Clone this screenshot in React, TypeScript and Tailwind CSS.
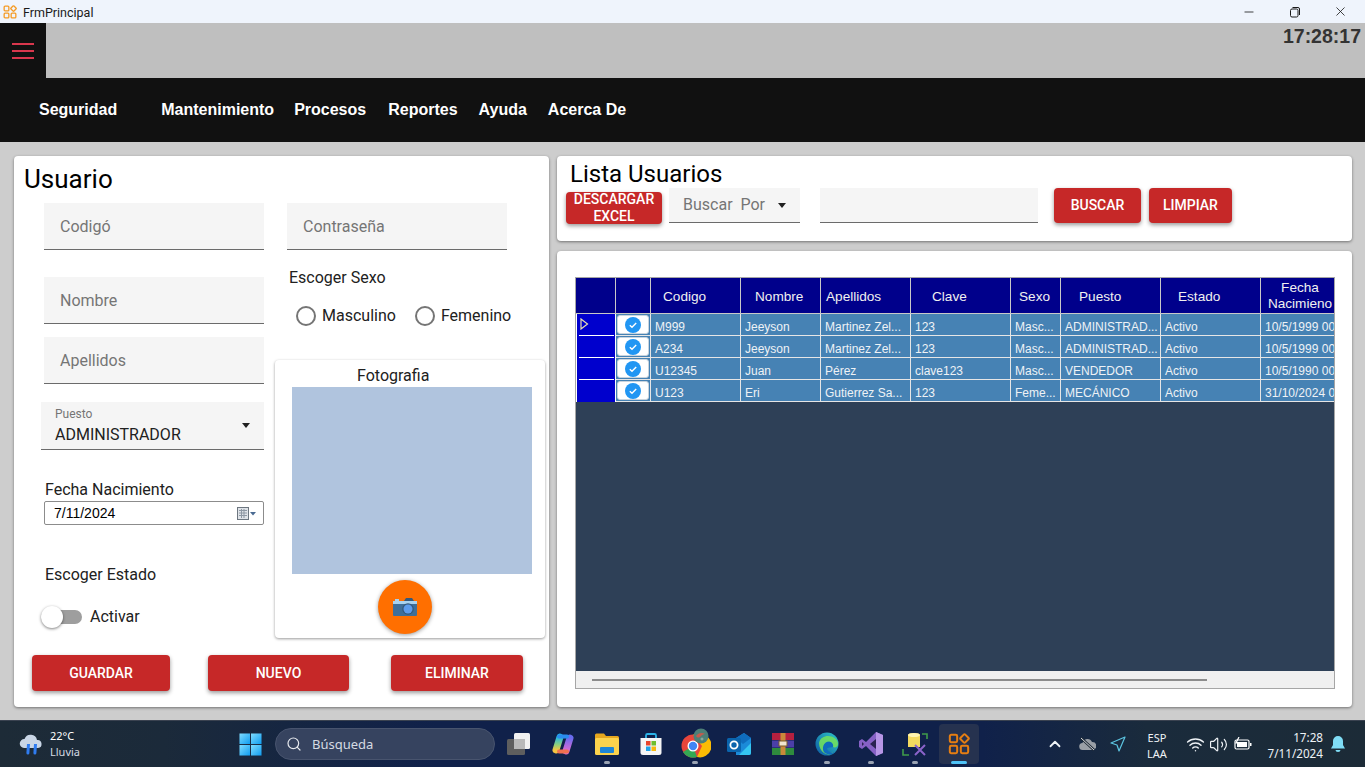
import { ReactNode } from 'react';
import { Search, ChevronUp, Wifi, Volume2, Minus, X } from 'lucide-react';

const columns = [
  { label: 'Codigo', w: 'w-[90px]', indent: 'pl-[12px]' },
  { label: 'Nombre', w: 'w-[80px]', indent: 'pl-[14px]' },
  { label: 'Apellidos', w: 'w-[90px]', indent: 'pl-[5px]' },
  { label: 'Clave', w: 'w-[100px]', indent: 'pl-[21px]' },
  { label: 'Sexo', w: 'w-[50px]', indent: 'pl-[8px]' },
  { label: 'Puesto', w: 'w-[100px]', indent: 'pl-[18px]' },
  { label: 'Estado', w: 'w-[100px]', indent: 'pl-[17px]' },
];

const rows = [
  ['M999', 'Jeeyson', 'Martinez Zel...', '123', 'Masc...', 'ADMINISTRAD...', 'Activo', '10/5/1999 00:00'],
  ['A234', 'Jeeyson', 'Martinez Zel...', '123', 'Masc...', 'ADMINISTRAD...', 'Activo', '10/5/1999 00:00'],
  ['U12345', 'Juan', 'Pérez', 'clave123', 'Masc...', 'VENDEDOR', 'Activo', '10/5/1990 00:00'],
  ['U123', 'Eri', 'Gutierrez Sa...', '123', 'Feme...', 'MECÁNICO', 'Activo', '31/10/2024 00:00'],
];

function AppLogo({ size, color }: { size: number; color: string }) {
  return (
    <svg width={size} height={size} viewBox="0 0 24 24" fill="none" stroke={color} strokeWidth="2.2">
      <rect x="2" y="2" width="8" height="8" rx="1.5" />
      <rect x="14.4" y="2.4" width="7.2" height="7.2" rx="1.2" transform="rotate(45 18 6)" />
      <rect x="2" y="14" width="8" height="8" rx="1.5" />
      <rect x="14" y="14" width="8" height="8" rx="1.5" />
    </svg>
  );
}

function TextField({ label, className }: { label: string; className: string }) {
  return (
    <div className={`h-[47px] w-[220px] border-b border-[#6b6b6b] bg-[#f5f5f5] flex items-center pl-[16px] pt-[2px] text-[16px] text-[#757575] ${className}`}>
      {label}
    </div>
  );
}

function RedButton({ children, className }: { children: ReactNode; className: string }) {
  return (
    <button className={`rounded-[4px] bg-[#c62828] text-white text-[14px] font-medium shadow-[0_2px_4px_rgba(0,0,0,0.4)] flex items-center justify-center ${className}`}>
      {children}
    </button>
  );
}

function Radio({ label }: { label: string }) {
  return (
    <div className="flex items-center gap-[6px] text-[16px] text-[#212121]">
      <span className="w-[20px] h-[20px] rounded-full border-2 border-[#757575] bg-white" />
      {label}
    </div>
  );
}

function RowCheck() {
  return (
    <div className="w-[35px] h-[22px] shrink-0 flex items-center justify-center border-r border-b border-[#e6e6e6] bg-[#4682b4]">
      <div className="w-[32px] h-[19px] rounded-[3px] bg-white border border-[#c9d4de] flex items-center justify-center">
        <svg width="16" height="16" viewBox="0 0 16 16">
          <circle cx="8" cy="8" r="8" fill="#2196f3" />
          <path d="M4.8 8.2 7 10.3 11.2 6" fill="none" stroke="white" strokeWidth="1.4" />
        </svg>
      </div>
    </div>
  );
}

function UserGrid() {
  return (
    <div className="h-[412px] w-[760px] border border-[#a6a6a6] bg-[#2e4057] flex flex-col overflow-hidden font-['Liberation_Sans',sans-serif]">
      <div className="flex h-[36px] shrink-0 bg-[#00008b] text-[13.6px] text-[#f0f0f0] border-b border-[#c8c8c8]">
        <div className="w-[40px] shrink-0 border-r border-[#c8c8c8]" />
        <div className="w-[35px] shrink-0 border-r border-[#c8c8c8]" />
        {columns.map((c) => (
          <div key={c.label} className={`${c.w} ${c.indent} shrink-0 border-r border-[#c8c8c8] flex items-center pt-[3px]`}>
            {c.label}
          </div>
        ))}
        <div className="w-[74px] shrink-0 text-center leading-[16px] pt-[2px] pl-[4px] whitespace-nowrap">
          Fecha
          <br />
          Nacimieno
        </div>
      </div>

      {rows.map((r, i) => (
        <div key={r[0] + i} className="flex h-[22px] shrink-0 text-[12px] text-[#eef2f6]">
          <div className="w-[40px] shrink-0 bg-[#0000cd] border-l border-white border-r relative">
            {i === 0 && (
              <svg className="absolute left-[3px] top-[4px]" width="9" height="12" viewBox="0 0 9 12">
                <path d="M1 1 L7.5 6 L1 11 Z" fill="#0000cd" stroke="#e8e0b0" strokeWidth="1.2" />
              </svg>
            )}
            {i < 3 && <div className="absolute left-[2px] right-[1px] bottom-0 h-[1px] bg-white" />}
          </div>
          <RowCheck />
          {r.slice(0, 7).map((v, j) => (
            <div
              key={j}
              className={`${columns[j].w} shrink-0 bg-[#4682b4] border-r border-b border-[#e6e6e6] pl-[4px] pt-[4px] whitespace-nowrap overflow-hidden`}
            >
              {v}
            </div>
          ))}
          <div className="w-[74px] shrink-0 bg-[#4682b4] border-b border-[#e6e6e6] pl-[4px] pt-[4px] whitespace-nowrap overflow-hidden">
            {r[7]}
          </div>
        </div>
      ))}
      <div className="flex-1" />
      <div className="h-[17px] shrink-0 bg-[#f0f0f0] flex items-center pl-[16px]">
        <div className="h-[2px] w-[615px] bg-[#8c8c8c]" />
      </div>
    </div>
  );
}

function WeatherIcon() {
  return (
    <svg width="26" height="24" viewBox="0 0 26 24">
      <path d="M6 16a4.5 4.5 0 0 1 .5-9 6.5 6.5 0 0 1 12.5 1 4 4 0 0 1 1 8Z" fill="#c9d6e6" />
      <path d="M9 12h3l-.6 9a1.5 1.5 0 0 1-3 0Z" fill="#2f7cf0" />
      <path d="M16 12h3l-.6 9a1.5 1.5 0 0 1-3 0Z" fill="#2f7cf0" />
    </svg>
  );
}

function WindowsLogo() {
  return (
    <svg width="23" height="23" viewBox="0 0 24 24">
      <defs>
        <linearGradient id="win" x1="0" y1="0" x2="1" y2="1">
          <stop offset="0" stopColor="#7fdcff" />
          <stop offset="1" stopColor="#0f9cf0" />
        </linearGradient>
      </defs>
      <rect x="0.5" y="0.5" width="11" height="11" fill="url(#win)" />
      <rect x="12.5" y="0.5" width="11" height="11" fill="url(#win)" />
      <rect x="0.5" y="12.5" width="11" height="11" fill="url(#win)" />
      <rect x="12.5" y="12.5" width="11" height="11" fill="url(#win)" />
    </svg>
  );
}

function TaskIcon({ children, dot, active }: { children: ReactNode; dot?: boolean; active?: boolean }) {
  return (
    <div className={`relative w-[40px] h-[40px] mx-[2px] flex items-center justify-center rounded-[4px] ${active ? 'bg-[#26324f]' : ''}`}>
      {children}
      {dot && <span className="absolute bottom-[0px] left-[17px] w-[6px] h-[3px] rounded-full bg-[#9aa3b2]" />}
      {active && <span className="absolute bottom-[0px] left-[12px] w-[16px] h-[3px] rounded-full bg-[#4fc3f7]" />}
    </div>
  );
}

function TaskbarApps() {
  return (
    <div className="flex items-center">
      <TaskIcon>
        <svg width="26" height="24" viewBox="0 0 26 24">
          <rect x="8" y="1" width="16" height="16" rx="1.5" fill="#f1f1f1" />
          <rect x="1" y="7" width="18" height="16" rx="1.5" fill="#5e5e5e" />
          <rect x="8" y="7" width="11" height="10" fill="#b9b9b9" />
        </svg>
      </TaskIcon>
      <TaskIcon>
        <svg width="24" height="22" viewBox="0 0 24 22" fill="none" strokeLinecap="round">
          <defs>
            <linearGradient id="copL" x1="0" y1="0" x2="0" y2="1">
              <stop offset="0" stopColor="#1fb6e8" />
              <stop offset="0.6" stopColor="#8fd07a" />
              <stop offset="1" stopColor="#f5c542" />
            </linearGradient>
            <linearGradient id="copR" x1="0" y1="0" x2="0" y2="1">
              <stop offset="0" stopColor="#6a6cf0" />
              <stop offset="1" stopColor="#e06ad0" />
            </linearGradient>
          </defs>
          <path d="M9 4 5 17" stroke="url(#copL)" strokeWidth="7" />
          <path d="M19 5 15 18" stroke="url(#copR)" strokeWidth="7" />
          <path d="M8 3.500h8" stroke="#2a8cf0" strokeWidth="4" />
          <path d="M8 18.500h8" stroke="#f0704f" strokeWidth="4" />
        </svg>
      </TaskIcon>
      <TaskIcon dot>
        <svg width="24" height="22" viewBox="0 0 24 22">
          <path d="M0 2a1.5 1.5 0 0 1 1.5-1.5H9L11 3h11.5A1.5 1.5 0 0 1 24 4.500V8H0Z" fill="#e6a71f" />
          <rect x="0" y="5" width="24" height="17" rx="1.5" fill="#fcd34d" />
          <rect x="5" y="14" width="14" height="6" rx="1" fill="#1f86d6" />
        </svg>
      </TaskIcon>
      <TaskIcon>
        <svg width="24" height="24" viewBox="0 0 24 24">
          <path d="M7 7V3.500A1.500 1.500 0 0 1 8.500 2h7A1.500 1.500 0 0 1 17 3.500V7" fill="none" stroke="#2db4e8" strokeWidth="1.8" />
          <path d="M1.500 6h21v14.500a2.500 2.500 0 0 1-2.500 2.500H4a2.500 2.500 0 0 1-2.500-2.500Z" fill="#f5f5f5" />
          <rect x="7" y="9" width="4.500" height="4.500" fill="#e8452c" />
          <rect x="12.500" y="9" width="4.500" height="4.500" fill="#6fbe2e" />
          <rect x="7" y="14.500" width="4.500" height="4.500" fill="#1fa2e8" />
          <rect x="12.500" y="14.500" width="4.500" height="4.500" fill="#f7b90f" />
        </svg>
      </TaskIcon>
      <TaskIcon dot>
        <svg width="32" height="32" viewBox="0 0 32 32">
          <circle cx="14" cy="18" r="11.500" fill="#e8453c" />
          <path d="M14 18 4 24a11.500 11.500 0 0 0 14 5Z" fill="#34a853" />
          <path d="M14 6.500h10A11.500 11.500 0 0 1 18 29l5-11Z" fill="#fbbc04" />
          <circle cx="14" cy="18" r="5.500" fill="white" />
          <circle cx="14" cy="18" r="4.200" fill="#4285f4" />
          <circle cx="22" cy="8" r="7.500" fill="#4d7f77" />
          <path d="M17 8c2-3 6-4 9-2-2 0-3 1-4 2s-3 3-5 0Z" fill="#c25b4e" />
          <circle cx="23" cy="11" r="1.500" fill="#88a89a" />
        </svg>
      </TaskIcon>
      <TaskIcon>
        <svg width="26" height="24" viewBox="0 0 26 24">
          <path d="M10 6 18 1l7 5v15a2 2 0 0 1-2 2H10Z" fill="#1b8ad8" />
          <path d="M13 23 25 11v10a2 2 0 0 1-2 2Z" fill="#35c5f0" />
          <path d="M10 6 18 1l7 5-8 6Z" fill="#0f6cbd" />
          <rect x="1" y="6" width="14" height="14" rx="1.500" fill="#0a64ad" />
          <circle cx="8" cy="13" r="3.600" fill="none" stroke="white" strokeWidth="1.800" />
        </svg>
      </TaskIcon>
      <TaskIcon>
        <svg width="24" height="24" viewBox="0 0 24 24">
          <rect x="1" y="1" width="22" height="7" fill="#b5203f" />
          <rect x="1" y="8.500" width="22" height="7" fill="#4b3fa8" />
          <rect x="1" y="16" width="22" height="7" fill="#2e8b3d" />
          <rect x="9.500" y="1" width="5" height="22" fill="#c98a3a" />
          <rect x="8" y="9" width="8" height="5" fill="#f0e6d0" stroke="#7a5a2a" />
        </svg>
      </TaskIcon>
      <TaskIcon dot>
        <svg width="24" height="24" viewBox="0 0 24 24">
          <defs>
            <linearGradient id="edge" x1="0" y1="1" x2="1" y2="0">
              <stop offset="0" stopColor="#0c59a4" />
              <stop offset="1" stopColor="#2fc6c6" />
            </linearGradient>
          </defs>
          <circle cx="12" cy="12" r="11.500" fill="url(#edge)" />
          <path d="M4 11c1-5 5-7 9-7 5 0 10 3 10 8 0 3-3 4-5 3 1-4-3-6-6-5-3 1-4 5-1 8 2 2 5 3 8 2-3 3-7 3-10 1-3-2-5-6-5-10Z" fill="#74e35a" opacity="0.85" />
          <path d="M12 10c3-1 7 1 6 5-3 1-6 0-6 2 1 3 5 4 8 3-3 3-7 3-10 1-3-2-3-9 2-11Z" fill="#0f6cbd" />
        </svg>
      </TaskIcon>
      <TaskIcon dot>
        <svg width="24" height="26" viewBox="0 0 24 26">
          <path d="M17 1 24 4v18l-7 3L7 15l-4 3-3-2V10l3-2 4 3Z" fill="#8661c5" />
          <path d="M17 1v24l7-3V4Z" fill="#b796e6" />
          <path d="M17 8v10l-6-5Z" fill="#2a2350" />
          <path d="M3 11v4l2-2Z" fill="#2a2350" />
        </svg>
      </TaskIcon>
      <TaskIcon dot>
        <svg width="26" height="26" viewBox="0 0 26 26" fill="none">
          <path d="M6 4a6 2 0 0 1 12 0v12H6Z" fill="#f4d95f" />
          <ellipse cx="12" cy="4" rx="6" ry="2" fill="#fff3b0" />
          <path d="M20 3h5v5M1 18v6h6" stroke="#3f9b4a" strokeWidth="1.600" />
          <path d="M13 14l10 10M23 14 13 24" stroke="#8a63c9" strokeWidth="2" />
        </svg>
      </TaskIcon>
      <TaskIcon active>
        <AppLogo size={22} color="#e67e12" />
      </TaskIcon>
    </div>
  );
}

function TrayIcons() {
  return (
    <div className="flex items-center text-[#eef2f6]">
      <ChevronUp size={18} strokeWidth={2.4} />
      <svg className="ml-[15px]" width="17" height="14" viewBox="0 0 17 14">
        <path d="M4 13a3.500 3.500 0 0 1-.5-7A5 5 0 0 1 13 5a3.200 3.200 0 0 1 .5 8Z" fill="#9a9fa6" />
        <path d="M2 1l13 12" stroke="#1f2a36" strokeWidth="2.500" />
        <path d="M2 1l13 12" stroke="#d5d8dc" strokeWidth="1" />
      </svg>
      <svg className="ml-[14px]" width="16" height="16" viewBox="0 0 16 16" fill="none">
        <path d="M15 1 1 7l6 2 2 6Z" stroke="#5cc4e0" strokeWidth="1.200" strokeLinejoin="round" />
      </svg>
      <div className="ml-[7px] w-[48px] pt-[3px] text-center text-[11px] leading-[16px] font-['Noto_Sans',sans-serif]">
        ESP
        <br />
        LAA
      </div>
      <Wifi size={19} strokeWidth={1.800} className="ml-[5px]" />
      <Volume2 size={19} strokeWidth={1.500} className="ml-[4px]" />
      <svg className="ml-[6px]" width="18" height="14" viewBox="0 0 18 14" fill="none">
        <rect x="1" y="3" width="14" height="9" rx="1.500" stroke="white" strokeWidth="1.200" />
        <rect x="3" y="5" width="10" height="5" fill="white" />
        <rect x="16" y="6" width="1.500" height="3" fill="white" />
        <path d="M5 0 2 6h3l-1 4" stroke="white" strokeWidth="1.200" />
      </svg>
      <div className="w-[71px] pt-[1px] text-right text-[11.7px] leading-[16px] font-['Noto_Sans',sans-serif]">
        17:28
        <br />
        7/11/2024
      </div>
      <svg className="ml-[7px]" width="16" height="18" viewBox="0 0 16 18">
        <path d="M8 1a5 5 0 0 0-5 5v4l-2 3.500h14L13 10V6a5 5 0 0 0-5-5Z" fill="#7fdcf5" />
        <path d="M5.500 15h5a2.500 2 0 0 1-5 0Z" fill="#7fdcf5" />
      </svg>
    </div>
  );
}

export default function App() {
  return (
    <div className="w-[1365px] h-[767px] overflow-hidden flex flex-col bg-[#cdcdcd] font-['Roboto',sans-serif]">
      {/* title bar */}
      <div className="h-[23px] shrink-0 bg-[#eff4fc] flex items-center text-[#1a1a1a]">
        <div className="ml-[3px]">
          <AppLogo size={14} color="#f59a23" />
        </div>
        <span className="ml-[6px] pt-[3px] text-[12.5px] font-['Roboto',sans-serif]">FrmPrincipal</span>
        <div className="ml-auto flex items-center mr-[17px]">
          <Minus size={14} strokeWidth={1.400} />
          <svg className="ml-[33px]" width="12" height="12" viewBox="0 0 12 12" fill="none" stroke="#1a1a1a">
            <rect x="1.500" y="3" width="7.500" height="8" rx="1.500" />
            <path d="M3.500 1.500H9a1.500 1.500 0 0 1 1.500 1.500v6" />
          </svg>
          <X size={15} strokeWidth={1.300} className="ml-[32px]" />
        </div>
      </div>

      {/* clock strip */}
      <div className="h-[55px] shrink-0 bg-[#bfbfbf] flex justify-between">
        <div className="w-[46px] bg-[#111111] flex items-center justify-center">
          <div className="flex flex-col gap-[5px]">
            <span className="block w-[22px] h-[2px] bg-[#d9374d]" />
            <span className="block w-[22px] h-[2px] bg-[#d9374d]" />
            <span className="block w-[22px] h-[2px] bg-[#d9374d]" />
          </div>
        </div>
        <div className="mr-[4px] mt-[2px] text-[19.5px] leading-[22px] font-bold text-[#333333] font-['Liberation_Sans',sans-serif]">
          17:28:17
        </div>
      </div>

      {/* menu */}
      <div className="h-[64px] shrink-0 bg-[#111111] flex items-center text-white text-[16px] font-bold font-['Liberation_Sans',sans-serif] pb-[1px]">
        <span className="ml-[39px]">Seguridad</span>
        <span className="ml-[44px]">Mantenimiento</span>
        <span className="ml-[20px]">Procesos</span>
        <span className="ml-[22px]">Reportes</span>
        <span className="ml-[21px]">Ayuda</span>
        <span className="ml-[21px]">Acerca De</span>
      </div>

      {/* body */}
      <div className="flex-1 min-h-0 flex gap-[8px] pt-[14px] pb-[13px] pl-[14px] pr-[13px]">
        {/* form card */}
        <div className="w-[535px] rounded-[4px] bg-white shadow-[0_1px_3px_rgba(0,0,0,0.45)]">
          <div className="h-[47px] pl-[10px] pt-[6px] text-[26px] leading-[34px] text-black">Usuario</div>
          <div className="flex h-[435px] pl-[27px]">
            <div className="w-[223px] flex flex-col text-[#212121]">
              <TextField label="Codigó" className="ml-[3px]" />
              <TextField label="Nombre" className="ml-[3px] mt-[27px]" />
              <TextField label="Apellidos" className="ml-[3px] mt-[13px]" />
              <div className="mt-[18px] h-[48px] bg-[#f5f5f5] border-b border-[#6b6b6b] pl-[14px] flex items-center justify-between pr-[14px]">
                <div className="pt-[1px]">
                  <div className="text-[12px] leading-[14px] text-[#757575]">Puesto</div>
                  <div className="mt-[4px] text-[16px] leading-[20px]">ADMINISTRADOR</div>
                </div>
                <span className="w-0 h-0 border-x-[4px] border-x-transparent border-t-[5px] border-t-[#212121]" />
              </div>
              <div className="mt-[28px] ml-[4px] h-[22px] text-[16px] leading-[24px]">Fecha Nacimiento</div>
              <div className="mt-[1px] ml-[3px] h-[24px] w-[220px] rounded-[2px] border border-[#8c8c8c] flex items-center pl-[9px] text-[14px] text-black font-['Liberation_Sans',sans-serif]">
                7/11/2024
                <svg className="ml-auto mr-[7px]" width="19" height="13" viewBox="0 0 19 13">
                  <rect x="0.500" y="0.500" width="11" height="12" fill="#dfe3e8" stroke="#6d7680" />
                  <path d="M2 3.500h8M2 6h8M2 8.500h8M4.500 2v9M7 2v9" stroke="#8d97a3" />
                  <path d="M13 5h6L16 8.500Z" fill="#4a6a92" />
                </svg>
              </div>
              <div className="mt-[38px] ml-[4px] h-[22px] text-[16px] leading-[24px]">Escoger Estado</div>
              <div className="mt-[20px] h-[24px] flex items-center">
                <div className="relative w-[41px] h-[14px] rounded-full bg-[#9e9e9e]">
                  <span className="absolute left-0 top-[-4px] w-[22px] h-[22px] rounded-full bg-white shadow-[0_1px_3px_rgba(0,0,0,0.5)]" />
                </div>
                <span className="ml-[8px] text-[16px]">Activar</span>
              </div>
            </div>
            <div className="ml-[11px] w-[270px] flex flex-col text-[#212121]">
              <TextField label="Contraseña" className="ml-[12px]" />
              <div className="mt-[16px] ml-[14px] h-[22px] text-[16px] leading-[24px]">Escoger Sexo</div>
              <div className="mt-[16px] ml-[21px] h-[24px] flex items-center gap-[19px]">
                <Radio label="Masculino" />
                <Radio label="Femenino" />
              </div>
              <div className="mt-[32px] h-[278px] rounded-[4px] bg-white shadow-[0_1px_3px_rgba(0,0,0,0.4)] flex flex-col">
                <div className="h-[27px] pl-[82px] pt-[6px] text-[16px] leading-[20px]">Fotografia</div>
                <div className="ml-[17px] w-[240px] h-[187px] bg-[#b0c4de]" />
                <div className="ml-[103px] mt-[6px] w-[54px] h-[54px] rounded-full bg-[#ff6f00] shadow-[0_1px_4px_rgba(0,0,0,0.4)] flex items-center justify-center">
                  <svg width="24" height="18" viewBox="0 0 24 18">
                    <rect x="0" y="3" width="24" height="15" rx="1" fill="#3f6f99" />
                    <rect x="0" y="3" width="24" height="3" fill="#a9d2ee" />
                    <rect x="2" y="1" width="4" height="2" fill="#a9d2ee" />
                    <path d="M11 3l2-3h6l2 3Z" fill="#35597c" />
                    <circle cx="15" cy="11" r="5.800" fill="#35597c" />
                    <circle cx="15" cy="11" r="4.500" fill="#5d9cec" />
                  </svg>
                </div>
              </div>
            </div>
          </div>
          <div className="flex mt-[17px] pl-[18px]">
            <RedButton className="w-[138px] h-[36px]">GUARDAR</RedButton>
            <RedButton className="ml-[38px] w-[141px] h-[36px]">NUEVO</RedButton>
            <RedButton className="ml-[42px] w-[132px] h-[36px]">ELIMINAR</RedButton>
          </div>
        </div>

        {/* list */}
        <div className="flex-1 flex flex-col gap-[10px]">
          <div className="h-[85px] rounded-[4px] bg-white shadow-[0_1px_3px_rgba(0,0,0,0.45)]">
            <div className="h-[32px] pl-[13px] pt-[4px] text-[24px] leading-[28px] text-black">Lista Usuarios</div>
            <div className="flex items-start pl-[9px]">
              <RedButton className="mt-[4px] w-[96px] h-[32px] leading-[17px] pb-[1px]">
                DESCARGAR
                <br />
                EXCEL
              </RedButton>
              <div className="ml-[7px] w-[131px] h-[35px] bg-[#f5f5f5] border-b border-[#6b6b6b] pl-[14px] pr-[14px] flex items-center justify-between text-[16px] text-[#757575]">
                <span className="whitespace-pre">Buscar  Por</span>
                <span className="w-0 h-0 border-x-[4px] border-x-transparent border-t-[5px] border-t-[#212121]" />
              </div>
              <div className="ml-[20px] w-[218px] h-[35px] bg-[#f5f5f5] border-b border-[#6b6b6b]" />
              <RedButton className="ml-[16px] w-[87px] h-[35px]">BUSCAR</RedButton>
              <RedButton className="ml-[8px] w-[83px] h-[35px]">LIMPIAR</RedButton>
            </div>
          </div>
          <div className="flex-1 rounded-[4px] bg-white shadow-[0_1px_3px_rgba(0,0,0,0.45)] pt-[26px] pl-[18px]">
            <UserGrid />
          </div>
        </div>
      </div>

      {/* taskbar */}
      <div className="h-[47px] shrink-0 border-t border-[#3a4250] bg-[linear-gradient(90deg,#1d2b37_0%,#1b2a3a_12%,#10214a_32%,#10214a_72%,#1a2b3c_84%,#1c2b37_100%)] flex items-center text-white">
        <div className="w-[239px] shrink-0 flex items-center pl-[18px]">
          <WeatherIcon />
          <div className="ml-[6px] text-[11px] leading-[16px] font-['Noto_Sans',sans-serif]">
            22°C
            <div className="text-[#d5dbe3]">Lluvia</div>
          </div>
        </div>
        <WindowsLogo />
        <div className="ml-[13px] w-[220px] h-[32px] rounded-full bg-[#36435f] border border-[#48546e] flex items-center pl-[10px] text-[13px] text-[#d5dbe3] font-['Noto_Sans',sans-serif]">
          <Search size={16} strokeWidth={1.800} className="text-[#e6e9ee]" />
          <span className="ml-[10px] pt-[2px]">Búsqueda</span>
        </div>
        <div className="ml-[2px]">
          <TaskbarApps />
        </div>
        <div className="ml-auto mr-[19px]">
          <TrayIcons />
        </div>
      </div>
    </div>
  );
}
